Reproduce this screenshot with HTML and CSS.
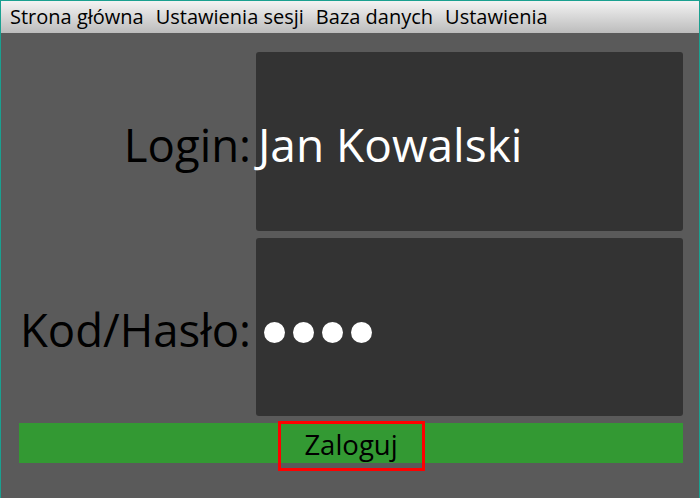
FILE: index.html
```html
<!DOCTYPE html>
<html lang="pl">
<head>
<meta charset="utf-8">
<title>Logowanie</title>
<link rel="stylesheet" href="styles.css">
</head>
<body>
<div class="window">
  <nav class="menubar">
    <span class="menu-item">Strona główna</span>
    <span class="menu-item">Ustawienia sesji</span>
    <span class="menu-item">Baza danych</span>
    <span class="menu-item">Ustawienia</span>
  </nav>
  <main class="form">
    <label class="label">Login:</label>
    <div class="field">Jan Kowalski</div>
    <label class="label">Kod/Hasło:</label>
    <div class="field field-pass"><span class="dot"></span><span class="dot"></span><span class="dot"></span><span class="dot"></span></div>
    <div class="actions"><button class="login-btn">Zaloguj</button></div>
  </main>
</div>
</body>
</html>
```

FILE: styles.css
```css
html, body {
  margin: 0;
  padding: 0;
}
body {
  font-family: "Open Sans", "Noto Sans", sans-serif;
  background: #5a5a5a;
}
.window {
  box-sizing: border-box;
  width: 700px;
  height: 498px;
  border: 1px solid #1aa090;
  border-bottom: none;
  background: #5a5a5a;
  display: flex;
  flex-direction: column;
}
.menubar {
  height: 32px;
  display: flex;
  align-items: center;
  padding-left: 3px;
  background: linear-gradient(#f3f3f3, #bcbcbc);
}
.menu-item {
  font-size: 20px;
  color: #000;
  padding: 0 6px;
  line-height: 32px;
}
.form {
  display: grid;
  grid-template-columns: 237px 427px;
  grid-template-rows: 179px 178px 40px;
  row-gap: 7px;
  padding: 19px 16px 0 18px;
}
.label {
  display: flex;
  align-items: center;
  justify-content: flex-end;
  padding-right: 5px;
  padding-top: 4px;
  font-size: 45.5px;
  color: #000;
}
.field {
  background: #333333;
  border-radius: 3px;
  display: flex;
  align-items: center;
  padding-left: 2px;
  padding-top: 4px;
  font-size: 46px;
  color: #fff;
}
.field-pass {
  padding-left: 8px;
  gap: 8px;
}
.dot {
  width: 21px;
  height: 21px;
  border-radius: 50%;
  background: #fff;
  margin-top: 6px;
}
.actions {
  grid-column: 1 / 3;
  background: #339933;
  display: flex;
  justify-content: center;
  align-items: flex-start;
}
.login-btn {
  box-sizing: border-box;
  width: 147px;
  height: 50px;
  margin-top: -2px;
  border: 3px solid #ff0000;
  background: transparent;
  font-family: inherit;
  font-size: 27.5px;
  color: #000;
  padding: 0 0 3px 0;
}
```
